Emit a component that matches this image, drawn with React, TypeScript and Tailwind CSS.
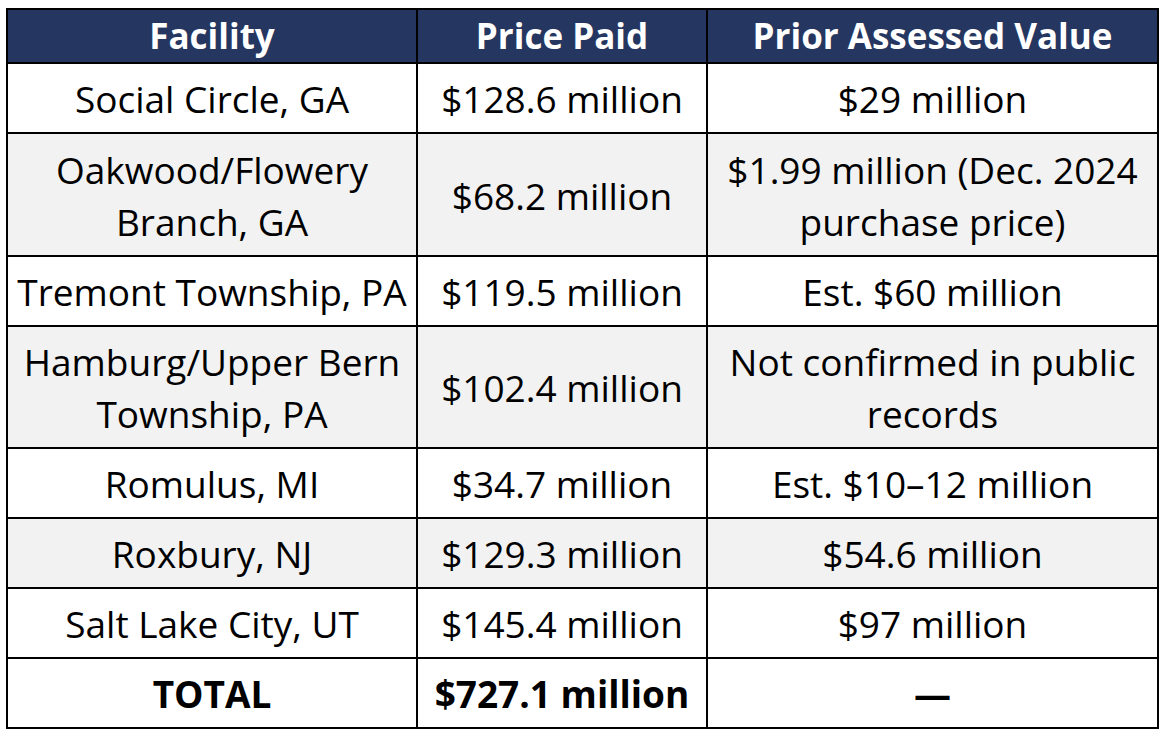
import React from 'react';

type Row = { facility: React.ReactNode; price: string; prior: React.ReactNode; h: string; shade?: boolean; bold?: boolean };

const rows: Row[] = [
  { facility: 'Social Circle, GA', price: '$128.6 million', prior: '$29 million', h: 'h-[70px]' },
  {
    facility: <>Oakwood/Flowery<br />Branch, GA</>,
    price: '$68.2 million',
    prior: <>$1.99 million (Dec. 2024<br />purchase price)</>,
    h: 'h-[123px]',
    shade: true,
  },
  { facility: 'Tremont Township, PA', price: '$119.5 million', prior: 'Est. $60 million', h: 'h-[70px]' },
  {
    facility: <>Hamburg/Upper Bern<br />Township, PA</>,
    price: '$102.4 million',
    prior: <>Not confirmed in public<br />records</>,
    h: 'h-[122px]',
    shade: true,
  },
  { facility: 'Romulus, MI', price: '$34.7 million', prior: 'Est. $10–12 million', h: 'h-[70px]' },
  { facility: 'Roxbury, NJ', price: '$129.3 million', prior: '$54.6 million', h: 'h-[70px]', shade: true },
  { facility: 'Salt Lake City, UT', price: '$145.4 million', prior: '$97 million', h: 'h-[70px]' },
  { facility: 'TOTAL', price: '$727.1 million', prior: '—', h: 'h-[70px]', bold: true },
];

const cell = 'flex items-center justify-center text-center whitespace-nowrap border-r-2 border-b-2 border-black leading-[52px]';

export default function App() {
  return (
    <div className="min-h-screen bg-white pt-[8px] pl-[6px] text-black" style={{ fontFamily: '"Open Sans", Lato, sans-serif' }}>
      <div className="grid w-[1153px] grid-cols-[410px_290px_451px] border-l-2 border-t-2 border-black text-[37px]">
        {['Facility', 'Price Paid', 'Prior Assessed Value'].map((t) => (
          <div key={t} className={`${cell} h-[54px] bg-[#253660] text-[35px] font-bold text-white`}>
            {t}
          </div>
        ))}
        {rows.map((r, ri) => (
          <React.Fragment key={ri}>
            {[r.facility, r.price, r.prior].map((t, i) => (
              <div key={i} className={`${cell} ${r.h} ${r.shade ? 'bg-[#f2f2f2]' : 'bg-white'} ${r.bold ? 'font-bold' : ''}`}>
                <span className="pt-[2px]">{t}</span>
              </div>
            ))}
          </React.Fragment>
        ))}
      </div>
    </div>
  );
}
